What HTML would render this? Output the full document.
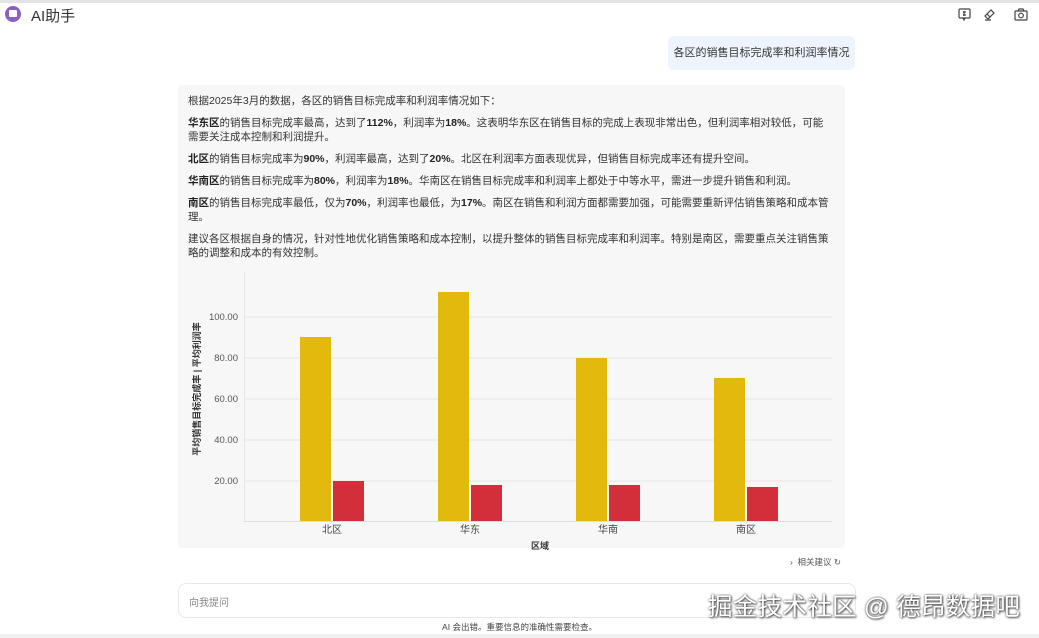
<!DOCTYPE html>
<html><head><meta charset="utf-8"><style>
*{margin:0;padding:0;box-sizing:border-box}
body{width:1039px;height:638px;background:#fff;position:relative;overflow:hidden;font-family:"Liberation Sans","Noto Sans CJK SC",sans-serif;color:#333}
.abs{position:absolute}
p{font-size:10.5px;line-height:14px;color:#333;margin-bottom:8px}
b{font-weight:bold;color:#222}
</style></head><body>
<div class="abs" style="left:0;top:0;width:1039px;height:3px;background:#e4e4e4"></div>
<div class="abs" style="left:5px;top:6px;width:16px;height:16px;border-radius:50%;background:#8b5fc4"><div style="position:absolute;left:4px;top:4px;width:8px;height:7px;background:#fff;border-radius:1px"></div></div>
<div class="abs" style="left:31px;top:5px;font-size:15px;color:#333">AI助手</div>
<svg class="abs" style="left:957px;top:7px" width="75" height="16" viewBox="0 0 75 16" fill="none" stroke="#444" stroke-width="1.2">
<rect x="2" y="2" width="11" height="9" rx="1"/><path d="M6 11l1 2 1-2M6 5h3M6 8h3M7 4v5"/>
<path d="M31 12l-3-3 6-6 3 3-6 6zM28 13h6M30 7l3 3"/>
<rect x="58" y="4" width="12" height="9" rx="1"/><circle cx="64" cy="8.5" r="2.3"/><path d="M61 4l1-2h4l1 2"/>
</svg>
<div class="abs" style="left:668px;top:36px;width:187px;height:34px;background:#eef4fd;border-radius:6px;font-size:11px;line-height:34px;text-align:center;color:#333">各区的销售目标完成率和利润率情况</div>
<div class="abs" style="left:178px;top:85px;width:667px;height:463px;background:#f7f7f7;border-radius:4px"></div>
<div class="abs" style="left:188px;top:94px;width:645px">
<p>根据2025年3月的数据，各区的销售目标完成率和利润率情况如下：</p>
<p><b>华东区</b>的销售目标完成率最高，达到了<b>112%</b>，利润率为<b>18%</b>。这表明华东区在销售目标的完成上表现非常出色，但利润率相对较低，可能需要关注成本控制和利润提升。</p>
<p><b>北区</b>的销售目标完成率为<b>90%</b>，利润率最高，达到了<b>20%</b>。北区在利润率方面表现优异，但销售目标完成率还有提升空间。</p>
<p><b>华南区</b>的销售目标完成率为<b>80%</b>，利润率为<b>18%</b>。华南区在销售目标完成率和利润率上都处于中等水平，需进一步提升销售和利润。</p>
<p><b>南区</b>的销售目标完成率最低，仅为<b>70%</b>，利润率也最低，为<b>17%</b>。南区在销售和利润方面都需要加强，可能需要重新评估销售策略和成本管理。</p>
<p>建议各区根据自身的情况，针对性地优化销售策略和成本控制，以提升整体的销售目标完成率和利润率。特别是南区，需要重点关注销售策略的调整和成本的有效控制。</p>
</div>
<svg class="abs" style="left:0;top:0" width="1039" height="638" font-family="Liberation Sans, Noto Sans CJK SC, sans-serif">
<g stroke="#e6e6e6" stroke-width="1">
<line x1="244" y1="317" x2="832" y2="317"/><line x1="244" y1="358" x2="832" y2="358"/><line x1="244" y1="399" x2="832" y2="399"/><line x1="244" y1="440" x2="832" y2="440"/><line x1="244" y1="481" x2="832" y2="481"/>
<line x1="244" y1="521.5" x2="832" y2="521.5" stroke="#ddd"/><line x1="244.5" y1="272" x2="244.5" y2="521"/>
</g>
<g font-size="9.5" fill="#555" text-anchor="end">
<text x="238" y="320">100.00</text><text x="238" y="361">80.00</text><text x="238" y="402">60.00</text><text x="238" y="443">40.00</text><text x="238" y="484">20.00</text>
</g>
<g fill="#e3b90e"><rect x="300" y="337" width="31" height="184"/><rect x="438" y="292" width="31" height="229"/><rect x="576" y="358" width="31" height="163"/><rect x="714" y="378" width="31" height="143"/></g>
<g fill="#d32f3b"><rect x="333" y="481" width="31" height="40"/><rect x="471" y="485" width="31" height="36"/><rect x="609" y="485" width="31" height="36"/><rect x="747" y="487" width="31" height="34"/></g>
<g font-size="10" fill="#444" text-anchor="middle"><text x="332" y="533">北区</text><text x="470" y="533">华东</text><text x="608" y="533">华南</text><text x="746" y="533">南区</text></g>
<text x="540" y="549" font-size="9" font-weight="bold" fill="#333" text-anchor="middle">区域</text>
<text transform="translate(200,389) rotate(-90)" font-size="9" font-weight="bold" fill="#333" text-anchor="middle">平均销售目标完成率 | 平均利润率</text>
</svg>
<div class="abs" style="left:790px;top:556px;font-size:8.5px;color:#555">›&nbsp;&nbsp;相关建议 ↻</div>
<div class="abs" style="left:178px;top:583px;width:678px;height:35px;border:1px solid #e8e8e8;border-radius:8px;font-size:10px;color:#888;padding:10px 10px">向我提问</div>
<div class="abs" style="left:0;top:621px;width:1039px;text-align:center;font-size:8.5px;color:#444">AI 会出错。重要信息的准确性需要检查。</div>
<div class="abs" style="left:0;top:634px;width:1039px;height:4px;background:#f0f0f0"></div>
<div class="abs" style="left:708px;top:588px;font-size:24.5px;color:#fff;text-shadow:0 0 2px #333,1px 1px 2px #555;letter-spacing:0.3px">掘金技术社区 @ 德昂数据吧</div>
</body></html>
